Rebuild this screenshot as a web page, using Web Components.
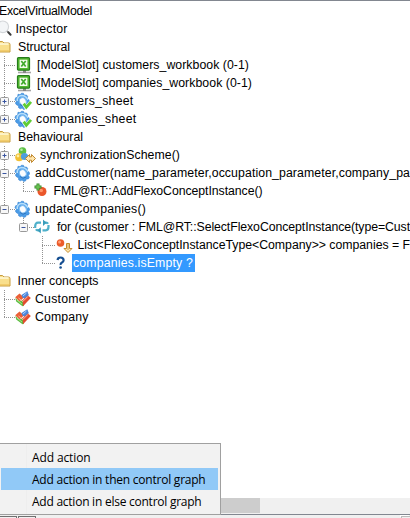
<!DOCTYPE html>
<html lang="en"><head><meta charset="utf-8"><title>ExcelVirtualModel</title>
<style>html,body{margin:0;height:100%;overflow:hidden;background:#fff}</style></head>
<body>
<model-browser>
<tree-row w="93" start="-1">ExcelVirtualModel</tree-row>
<tree-row icon="search" start="15.5" w="52">Inspector</tree-row>
<tree-row icon="folder" start="18" w="52">Structural</tree-row>
<tree-row guides="T" icon="excel" start="37" w="212">[ModelSlot] customers_workbook (0-1)</tree-row>
<tree-row guides="T" icon="excel" start="37" w="215">[ModelSlot] companies_workbook (0-1)</tree-row>
<tree-row guides="P" icon="gearcheck" start="36" w="97.5">customers_sheet</tree-row>
<tree-row guides="Q" icon="gearcheck" start="36" w="100.5">companies_sheet</tree-row>
<tree-row icon="folder" start="18" w="65">Behavioural</tree-row>
<tree-row guides="P" icon="sync" start="40" w="140">synchronizationScheme()</tree-row>
<tree-row guides="M" icon="gear" start="35" w="375">addCustomer(name_parameter,occupation_parameter,company_pa</tree-row>
<tree-row guides="IL" icon="add" start="53.500" w="209">FML@RT::AddFlexoConceptInstance()</tree-row>
<tree-row guides="N" icon="gear" start="35" w="111">updateCompanies()</tree-row>
<tree-row guides=" N" icon="loop" start="57" w="353">for (customer : FML@RT::SelectFlexoConceptInstance(type=Cust</tree-row>
<tree-row guides="  T" icon="assign" start="77.500" w="332.500">List&lt;FlexoConceptInstanceType&lt;Company&gt;&gt; companies = F</tree-row>
<tree-row guides="  L" icon="query" start="73" w="120" selected>companies.isEmpty ?</tree-row>
<tree-row icon="folder" start="17.500" w="81">Inner concepts</tree-row>
<tree-row guides="T" icon="concept" start="35" w="55">Customer</tree-row>
<tree-row guides="L" icon="concept" start="35" w="53.500">Company</tree-row>
<scroll-bar slot="bar"></scroll-bar>
<context-menu slot="menu">
<menu-entry w="58.500">Add action</menu-entry>
<menu-entry w="173.500" active>Add action in then control graph</menu-entry>
<menu-entry w="169.500">Add action in else control graph</menu-entry>
</context-menu>
</model-browser>
<script>
const gear='<path d="M3 1.200l2 .6 1.500-1.600 2 .2.800 1.800 2.200-.2 1.200 1.600-.6 2 1.900 1.200.6 2.200-1.300 1.300 1 2-1 1.700-2-.1-.6 1.900-2 .6-1.600-1.400-1.900.8-1.700-1.200.2-1.900-2-.7L.3 10l1.200-1.500L0 6.800l.6-2 2-.5z" fill="#4c9ce6" stroke="#2f7fd2" stroke-width=".6"/><path d="M2.200 8Q1.800 3.500 6.500 2.500Q11 2.500 13 7" fill="none" stroke="#b4defb" stroke-width="1.600"/><ellipse cx="7.800" cy="8.300" rx="3.400" ry="3.800" transform="rotate(-30 7.800 8.300)" fill="#fbfdff" stroke="#7ebcf2" stroke-width="1.200"/><path d="M5 11.500q3 3.200 6.200.4" fill="none" stroke="#256cb9" stroke-width=".9"/>';
const ICONS={
search:[0,15,'<circle cx="2.800" cy="5.800" r="5.800" fill="#f3f5f7" stroke="#d3d6d9" stroke-width="1.200"/><path d="M7 10l1.500 1.500" stroke="#999" stroke-width="1.500"/><path d="M8.300 11.300l2.300 2.500" stroke="#3c3c3c" stroke-width="2" stroke-linecap="round"/>'],
folder:[0,11,'<path d="M-5 2.500H2.500L4 4H8.500q1.500 0 1.500 1.500V13H-5z" fill="#f9df8c" stroke="#c79b3d"/><path d="M-5 5H8.500" stroke="#fff8d6" stroke-width="1.600"/><path d="M-5 11.900H9.300" stroke="#edc159"/>'],
excel:[2,16,'<path d="M2 15.500h13" stroke="#a6a6a6" stroke-width="1.600"/><path d="M8.500 12v4" stroke="#888" stroke-width="3"/><rect x="1.500" y=".6" width="12" height="12.600" rx="1" fill="#52b82f" stroke="#267b1c" stroke-width="1.200"/><rect x="3.600" y="2.700" width="7.800" height="8.300" fill="#f3fcec"/><path d="M5.300 4l4.400 5.500M9.700 4L5.300 9.500" stroke="#3faa2a" stroke-width="1.700"/>'],
gear:[1,17,gear],
gearcheck:[1,17,gear+'<path d="M8.500 10.500l2.700 4L16.500 8.500" fill="none" stroke="#fff" stroke-width="4"/><path d="M8.700 10.700l2.600 3.500L16 8.800" fill="none" stroke="#5fcc35" stroke-width="2.800"/>'],
sync:[1,21,'<circle cx="7.500" cy="4" r="3.800" fill="#5cc044"/><circle cx="4.200" cy="10.300" r="4" fill="#f2c136"/><circle cx="9.500" cy="9.500" r="3.600" fill="#4d9ddd"/><circle cx="6.500" cy="2.700" r="1.300" fill="#b6eca5"/><circle cx="3" cy="9" r="1.400" fill="#fff0a2"/><path d="M10.500 11.500l4-4v2.300h2V7.500l4 4-4 4v-2.300h-2v2.300z" fill="#ffe6ae" stroke="#c0882e"/>'],
add:[1,17,'<circle cx="8" cy="8.500" r="4.500" fill="#ea562a"/><circle cx="7.200" cy="7.500" r="1.800" fill="#ff9468"/><path d="M4 .5v7M.5 4h7" stroke="#34852b" stroke-width="3"/><path d="M4 1.300v5.400M1.300 4h5.400" stroke="#6cc653" stroke-width="1.500"/>'],
loop:[1,17,'<path d="M7 3.700H4Q1.200 3.700 1.200 7.200V9M8.500 11.300h3.300q2.700 0 2.700-3.500V6M9 3.700h3q1.500 0 2 1M6.500 11.300H4q-1.500 0-2-1" fill="none" stroke="#4fb0ca" stroke-width="2.200"/><path d="M9 .5l3.500 3.200L9 7zM6.800 8.200l-3.500 3.100 3.500 3.200z" fill="#3a9cba"/>'],
assign:[4,18,'<circle cx="4.500" cy="6" r="3.800" fill="#ec5b2a"/><circle cx="3.600" cy="4.900" r="1.500" fill="#ffa079"/><path d="M10.500 6.500v5H8l4 4 4-4h-2.500v-5z" fill="#ffe9b0" stroke="#c48a2c"/><path d="M12 7v6" stroke="#c48a2c" stroke-width=".8"/>'],
query:[4,10,'<path d="M1.500 5Q1.800 2.500 4.600 2.500T7.600 5.200Q7.600 6.600 6 7.500T4.600 10" fill="none" stroke="#164f91" stroke-width="2.200"/><circle cx="4.600" cy="12.500" r="1.300" fill="#164f91"/>'],
concept:[1,17,'<path d="M.2 6.300L4.500 2.500 9 6.500 4.500 10.500z" fill="#ea5f36"/><path d="M6.500 4L12.300 .3 13.800 4 10 8 7.500 6.500z" fill="#4b87da"/><path d="M.3 7l4 3.500L8 9l1 5.800-1.500.5L1.200 10.500z" fill="#5cbc42"/><path d="M8 15.300L7.500 9 13 4.500 15.800 7z" fill="#e34d30"/><path d="M3.500 7l4.300 3.500 5-5" stroke="#ffc9ad" stroke-width=".9" fill="none"/><path d="M8 5l3.500-3" stroke="#acd0ff"/><path d="M2 9l5 4" stroke="#a5e48a"/>']};
/* Spreads the label's letters so that it takes its declared width. */
function fit(host,el){const w=+host.getAttribute('w'),n=host.textContent.length;
 if(w)el.style.letterSpacing=((w-el.getBoundingClientRect().width)/n)+'px';}
customElements.define('tree-row',class extends HTMLElement{connectedCallback(){
 const g=this.getAttribute('guides')||'',ic=ICONS[this.getAttribute('icon')],start=+this.getAttribute('start');
 let used=0,h='';
 [...g].forEach((c,i)=>{const W=i?19:14,x=i?9:4;used+=W;let s='';
  const line=(x1,y1,x2,y2)=>`<path d="M${x1} ${y1}L${x2} ${y2}" stroke="#929292" stroke-dasharray="1 1"/>`;
  if('TPIM'.includes(c)||(c==='N'&&i))s+=line(x+.5,0,x+.5,c==='N'?9:18);
  if('LQ'.includes(c)||(c==='N'&&!i))s+=line(x+.5,0,x+.5,9);
  if(c!==' '&&c!=='I')s+=line(x,9.5,W+1+(i===2?2:0),9.5);
  if('PQMN'.includes(c))s+=`<rect x="${x-3.5}" y="5.500" width="8" height="8" rx="1" fill="#f7f7f7" stroke="#999"/><path d="M${x-1.500} 9.500h4${'PQ'.includes(c)?`M${x+.5} 7.500v4`:''}" stroke="#3954a0" fill="none"/>`;
  h+=`<svg width="${W}" height="18">${s}</svg>`;});
 if(ic){const w=start-used;h+=`<svg width="${w}" height="18"><g transform="translate(${ic[0]} 1)">${ic[2]}</g></svg>`;used+=w;}
 this.attachShadow({mode:'open'}).innerHTML=`<style>:host{display:flex;height:18px;flex:none;align-items:center;white-space:pre;font:12.3px/18px "Liberation Sans",Arial,sans-serif;color:#000}
 svg{display:block;flex:none;overflow:visible}.label{flex:none;height:18px;margin-left:${start-used}px}
 :host([selected]) .label{background:#3399ff;color:#fff;box-shadow:-1px 0 #3399ff,2px 0 #3399ff}</style>${h}<span class="label"><slot></slot></span>`;
 fit(this,this.shadowRoot.querySelector('.label'));}});
customElements.define('menu-entry',class extends HTMLElement{connectedCallback(){
 this.attachShadow({mode:'open'}).innerHTML=`<style>:host{display:block;box-sizing:border-box;height:22px;padding:1px 0 0 31px;white-space:pre;font:12px/22px "Open Sans","Noto Sans",sans-serif;color:#000}
 :host([active]){background:#91c9f7}</style><span><slot></slot></span>`;
 fit(this,this.shadowRoot.querySelector('span'));}});
customElements.define('context-menu',class extends HTMLElement{connectedCallback(){
 this.attachShadow({mode:'open'}).innerHTML=`<style>:host{position:absolute;left:0;top:443px;width:221px;height:72px;box-sizing:border-box;border:1px solid #a0a0a0;border-left:0;padding:2px 2px 2px 1px;background:linear-gradient(90deg,transparent 26px,#eee 26px 27px,transparent 27px) #f2f2f2}</style><slot></slot>`;}});
customElements.define('scroll-bar',class extends HTMLElement{connectedCallback(){
 this.attachShadow({mode:'open'}).innerHTML=`<style>:host{display:block;height:16px;background:#f0f0f0;flex:none}i{display:block;width:260px;height:15px;background:#cdcdcd}</style><i></i>`;}});
customElements.define('model-browser',class extends HTMLElement{connectedCallback(){
 this.attachShadow({mode:'open'}).innerHTML=`<style>:host{display:flex;flex-direction:column;width:410px;height:518px;overflow:hidden;position:relative;background:#fff}
 .tree{flex:1;min-height:0;border-top:1px solid #828790;padding-top:1px;box-sizing:border-box;overflow:hidden}
 .edge{height:4px;box-sizing:border-box;flex:none;background:#f0f0f0;border-top:1px solid #828790;display:flex;align-items:flex-end}
 .a,.b,.c{height:2px;box-sizing:border-box;border:1px solid #707070;border-bottom:0}.a{width:17px;border-left:0}.b{width:18px;margin-left:1px}.c{width:9px;margin-left:auto;border-color:#bbb;border-right:0;box-shadow:-1px -1px #fff}</style>
 <div class="tree"><slot></slot></div><slot name="bar"></slot><div class="edge"><span class="a"></span><span class="b"></span><span class="c"></span></div><slot name="menu"></slot>`;}});
</script></body></html>
